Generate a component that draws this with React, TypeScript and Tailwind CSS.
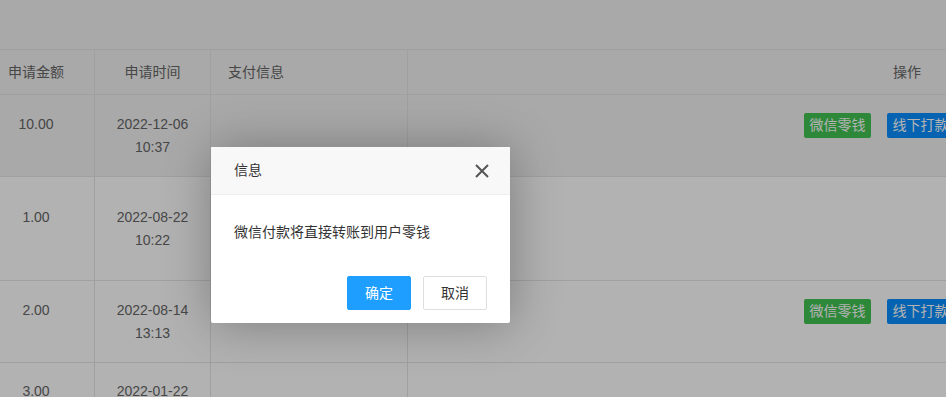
import React from 'react';

interface Row {
  amount: string;
  date: string;
  time: string;
  height: string;
  pad: string;
  hover?: boolean;
  actions?: boolean;
}

const ROWS: Row[] = [
  { amount: '10.00', date: '2022-12-06', time: '10:37', height: 'h-[82px]', pad: 'pt-[18px]', hover: true, actions: true },
  { amount: '1.00', date: '2022-08-22', time: '10:22', height: 'h-[104px]', pad: 'pt-[29px]' },
  { amount: '2.00', date: '2022-08-14', time: '13:13', height: 'h-[82px]', pad: 'pt-[18px]', actions: true },
  { amount: '3.00', date: '2022-01-22', time: '09:41', height: 'h-[82px]', pad: 'pt-[17px]' },
];

function Badge({ label, color }: { label: string; color: string }) {
  return (
    <span className={`inline-flex h-[25px] w-[67px] items-center justify-center rounded-[2px] text-[14px] text-white ${color}`}>
      {label}
    </span>
  );
}

export default function App() {
  return (
    <div
      className="relative h-[397px] w-[946px] overflow-hidden bg-[#f2f2f2] text-[14px] text-[#666]"
      style={{ fontFamily: '"Liberation Sans", "Noto Sans CJK SC", sans-serif' }}
    >
      {/* Page: table scrolled a little to the right */}
      <div className="h-[49px]" />
      <div className="-ml-[22px] border-t border-[#e6e6e6] bg-white">
        {/* Header */}
        <div className="flex h-[45px] border-b border-[#e6e6e6] bg-[#f2f2f2] leading-[23px]">
          <div className="flex w-[117px] shrink-0 items-center justify-center border-r border-[#e6e6e6]">申请金额</div>
          <div className="flex w-[116px] shrink-0 items-center justify-center border-r border-[#e6e6e6]">申请时间</div>
          <div className="flex w-[197px] shrink-0 items-center border-r border-[#e6e6e6] pl-[17px]">支付信息</div>
          <div className="flex flex-1 items-center pl-[485px]">操作</div>
        </div>

        {ROWS.map((r) => (
          <div
            key={r.amount}
            className={`flex ${r.height} border-b border-[#e6e6e6] leading-[23px] ${r.hover ? 'bg-[#f2f2f2]' : 'bg-white'}`}
          >
            <div className={`w-[117px] shrink-0 border-r border-[#e6e6e6] text-center ${r.pad}`}>{r.amount}</div>
            <div className={`w-[116px] shrink-0 border-r border-[#e6e6e6] text-center ${r.pad}`}>
              <div>{r.date}</div>
              <div>{r.time}</div>
            </div>
            <div className="w-[197px] shrink-0 border-r border-[#e6e6e6]" />
            <div className={`flex flex-1 items-start gap-[16px] pl-[396px] ${r.pad}`}>
              {r.actions && (
                <>
                  <Badge label="微信零钱" color="bg-[#42c354]" />
                  <Badge label="线下打款" color="bg-[#0a8fff]" />
                </>
              )}
            </div>
          </div>
        ))}
      </div>

      {/* Shade */}
      <div className="absolute inset-0 bg-black/30" />

      {/* Dialog */}
      <div className="absolute left-[211px] top-[147px] w-[299px] rounded-[2px] bg-white shadow-[1px_1px_50px_rgba(0,0,0,0.3)]">
        <div className="flex h-[48px] items-center justify-between border-b border-[#eee] bg-[#f8f8f8] pl-[23px] pr-[21px] text-[14px] text-[#333]">
          <span>信息</span>
          <svg width="14" height="14" viewBox="0 0 14 14" fill="none">
            <path d="M1 1L13 13M13 1L1 13" stroke="#555" strokeWidth="2" />
          </svg>
        </div>
        <div className="flex h-[81px] items-center pb-[6px] pl-[23px] text-[14px] text-[#333]">微信付款将直接转账到用户零钱</div>
        <div className="flex justify-end gap-[12px] pb-[13px] pr-[23px]">
          <button className="h-[34px] w-[64px] rounded-[2px] border border-[#1e9fff] bg-[#1e9fff] text-[14px] text-white">确定</button>
          <button className="h-[34px] w-[64px] rounded-[2px] border border-[#dedede] bg-white text-[14px] text-[#333]">取消</button>
        </div>
      </div>
</div>
  );
}
